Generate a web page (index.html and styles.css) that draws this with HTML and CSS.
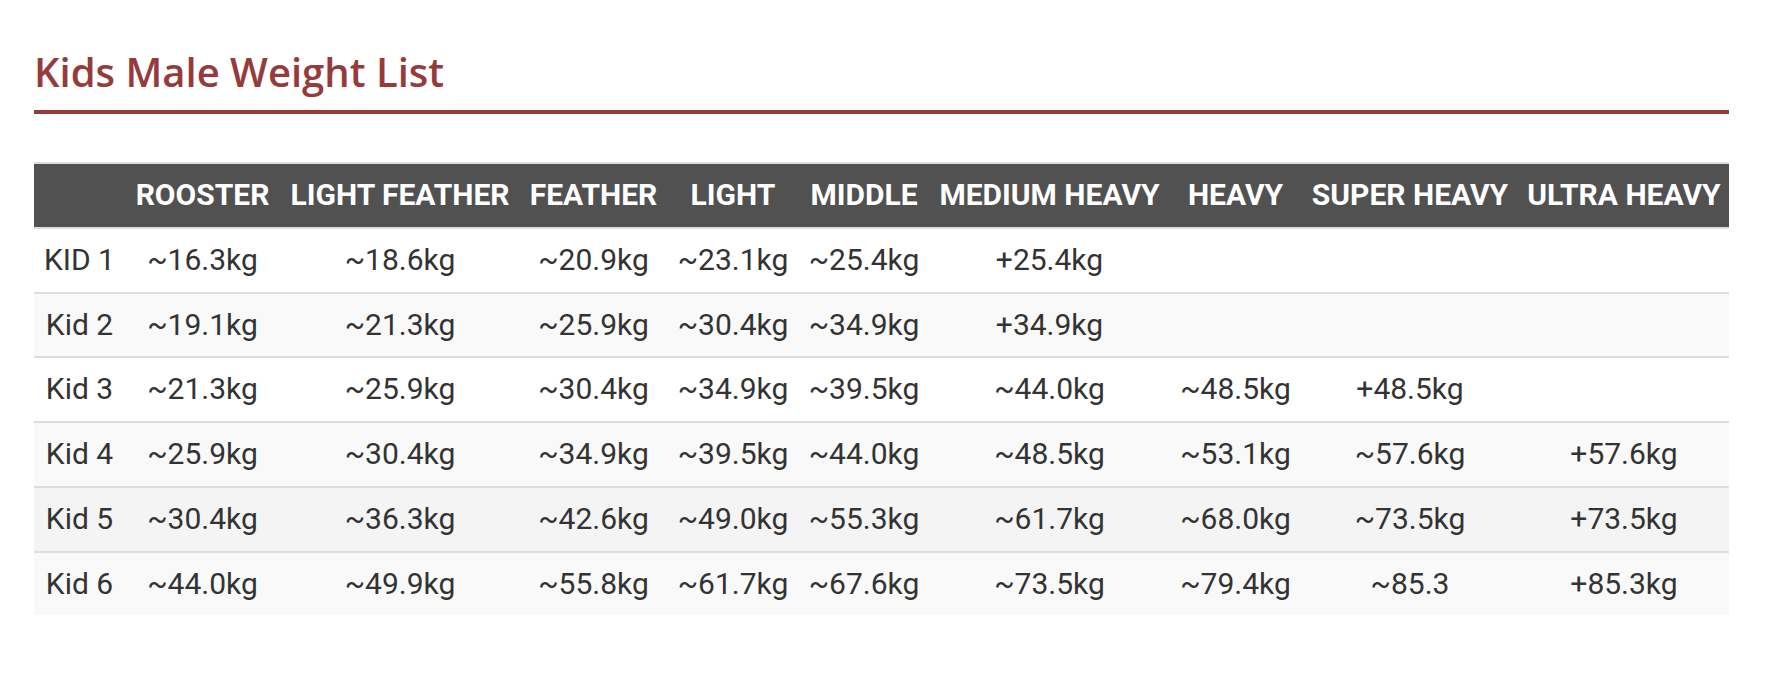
FILE: index.html
```html
<!DOCTYPE html>
<html lang="en">
<head>
<meta charset="utf-8">
<title>Kids Male Weight List</title>
<link rel="stylesheet" href="styles.css">
</head>
<body>
<main class="page">
  <h2 class="title">Kids Male Weight List</h2>
  <table class="weights">
    <colgroup>
      <col class="c-kid">
      <col class="c-rooster">
      <col class="c-lfeather">
      <col class="c-feather">
      <col class="c-light">
      <col class="c-middle">
      <col class="c-mheavy">
      <col class="c-heavy">
      <col class="c-sheavy">
      <col class="c-uheavy">
    </colgroup>
    <thead>
      <tr>
        <th></th>
        <th>ROOSTER</th>
        <th>LIGHT FEATHER</th>
        <th>FEATHER</th>
        <th>LIGHT</th>
        <th>MIDDLE</th>
        <th>MEDIUM HEAVY</th>
        <th>HEAVY</th>
        <th>SUPER HEAVY</th>
        <th>ULTRA HEAVY</th>
      </tr>
    </thead>
    <tbody>
      <tr>
        <td>KID 1</td><td>~16.3kg</td><td>~18.6kg</td><td>~20.9kg</td><td>~23.1kg</td><td>~25.4kg</td><td>+25.4kg</td><td></td><td></td><td></td>
      </tr>
      <tr class="alt">
        <td>Kid 2</td><td>~19.1kg</td><td>~21.3kg</td><td>~25.9kg</td><td>~30.4kg</td><td>~34.9kg</td><td>+34.9kg</td><td></td><td></td><td></td>
      </tr>
      <tr>
        <td>Kid 3</td><td>~21.3kg</td><td>~25.9kg</td><td>~30.4kg</td><td>~34.9kg</td><td>~39.5kg</td><td>~44.0kg</td><td>~48.5kg</td><td>+48.5kg</td><td></td>
      </tr>
      <tr class="alt">
        <td>Kid 4</td><td>~25.9kg</td><td>~30.4kg</td><td>~34.9kg</td><td>~39.5kg</td><td>~44.0kg</td><td>~48.5kg</td><td>~53.1kg</td><td>~57.6kg</td><td>+57.6kg</td>
      </tr>
      <tr class="hover">
        <td>Kid 5</td><td>~30.4kg</td><td>~36.3kg</td><td>~42.6kg</td><td>~49.0kg</td><td>~55.3kg</td><td>~61.7kg</td><td>~68.0kg</td><td>~73.5kg</td><td>+73.5kg</td>
      </tr>
      <tr class="alt">
        <td>Kid 6</td><td>~44.0kg</td><td>~49.9kg</td><td>~55.8kg</td><td>~61.7kg</td><td>~67.6kg</td><td>~73.5kg</td><td>~79.4kg</td><td>~85.3</td><td>+85.3kg</td>
      </tr>
    </tbody>
  </table>
</main>
</body>
</html>
```

FILE: styles.css
```css
html, body {
  margin: 0;
  padding: 0;
  background: #ffffff;
}

.page {
  padding: 0 53px 0 34px;
}

.title {
  margin: 0;
  padding: 48px 0 14px;
  font-family: "Open Sans", "Liberation Sans", sans-serif;
  font-weight: 600;
  font-size: 40px;
  line-height: 48px;
  color: #963b3b;
  border-bottom: 4px solid #963b3b;
}

.weights {
  margin-top: 48px;
  width: 100%;
  table-layout: fixed;
  border-collapse: separate;
  border-spacing: 0;
  font-family: Roboto, "Liberation Sans", sans-serif;
  font-size: 30px;
  color: #333333;
}

.c-kid { width: 91px; }
.c-rooster { width: 155px; }
.c-lfeather { width: 240px; }
.c-feather { width: 147px; }
.c-light { width: 132px; }
.c-middle { width: 130px; }
.c-mheavy { width: 241px; }
.c-heavy { width: 131px; }
.c-sheavy { width: 218px; }
.c-uheavy { width: 210px; }

.weights th,
.weights td {
  padding: 0;
  text-align: center;
  vertical-align: middle;
  white-space: nowrap;
  border-top: 2px solid #dddddd;
  line-height: 62.8px;
}

.weights th {
  background: #515151;
  color: #ffffff;
  font-weight: 700;
  line-height: 62.7px;
}

.weights tbody tr {
  background: #ffffff;
}

.weights tbody tr.alt {
  background: #f9f9f9;
}

.weights tbody tr.hover {
  background: #f4f4f4;
}
```
